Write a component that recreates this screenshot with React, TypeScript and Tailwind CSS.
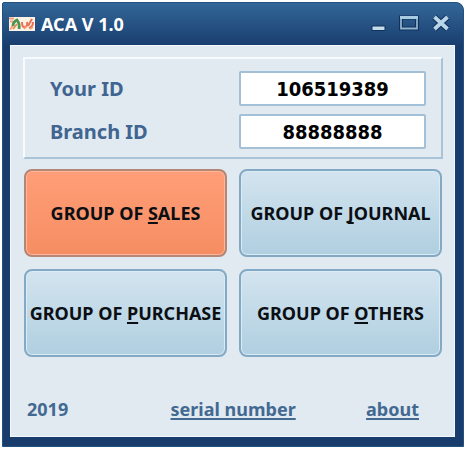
import React from "react";

type FieldProps = {
    id: string,
    label: string,
    value: string
}

type GroupButtonProps = {
    accessKey: string,
    rest: string,
    active?: boolean
}

const AppIcon: React.FC = () => {
    return(
        <svg width="26" height="14" viewBox="0 0 26 14" aria-hidden="true">
            <rect width="26" height="14" fill="#fdf3e4"/>
            <path d="M0 1.500h5M1 4.500h3M1 12.500l3-4" stroke="#f0a27c" strokeWidth="1.800"/>
            <path d="M4 9Q4 5 8 3q3 4 2 9" fill="none" stroke="#4d9454" strokeWidth="2.8"/>
            <path d="M4 12l4-5" stroke="#e08a4c" strokeWidth="1.8"/>
            <path d="M13 5q0 6 3 5t2-5M19 9l4-7M20 11q4-1 4-6" fill="none" stroke="#ee6f55" strokeWidth="2"/>
            <path d="M15 12l3-3M21 12l3-2" stroke="#f3a073" strokeWidth="1.6"/>
        </svg>
    )
}

const TitleBar: React.FC = () => {
    return(
        <header className="flex h-[42px] items-center pl-1.5 pr-3">
            <AppIcon/>
            <h1 className="ml-1.5 flex-1 font-['Noto_Sans',sans-serif] text-[18px] leading-6 font-bold text-white">ACA V 1.0</h1>
            <div className="flex items-center gap-3">
                <button type="button" aria-label="Minimize" className="flex h-5 w-4 items-center justify-center">
                    <svg width="16" height="18" viewBox="0 0 16 18">
                        <path d="M1 11h13v4.500h-13z" fill="#c5dcea" stroke="#12305a"/>
                    </svg>
                </button>
                <button type="button" aria-label="Maximize" className="flex h-5 w-5 items-center justify-center">
                    <svg width="20" height="18" viewBox="0 0 20 18">
                        <rect x="2" y="2.500" width="16" height="11" fill="none" stroke="#12305a" strokeWidth="4"/>
                        <path d="M2 2v11.500h16V2" fill="none" stroke="#8db3d0" strokeWidth="1.8"/>
                        <path d="M1 2.500h18" stroke="#a9cbe2" strokeWidth="3"/>
                    </svg>
                </button>
                <button type="button" aria-label="Close" className="flex h-5 w-5 items-center justify-center">
                    <svg width="20" height="18" viewBox="0 0 20 18">
                        <path d="M3.500 2l13 12M16.500 2l-13 12" stroke="#12305a" strokeWidth="6"/>
                        <path d="M3.500 2l13 12M16.500 2l-13 12" stroke="#b9d5e8" strokeWidth="3.800"/>
                    </svg>
                </button>
            </div>
        </header>
    )
}

const Field: React.FC<FieldProps> = ({id, label, value}) => {
    return(
        <div className="grid grid-cols-2 items-center">
            <label htmlFor={id} className="pl-[25px] font-['Noto_Sans',sans-serif] text-[20px] leading-6 font-bold text-[#3f6590]">
                {label}
            </label>
            <input
            id={id} type="text" defaultValue={value}
            className="ml-1.5 mr-[15px] h-[35px] min-w-0 rounded-xs border-2 border-[#a4c0d6] bg-white text-center font-['DejaVu_Sans_Condensed','DejaVu_Sans',sans-serif] text-[20px] font-bold text-black"/>
        </div>
    )
}

const GroupButton: React.FC<GroupButtonProps> = ({accessKey, rest, active}) => {
    const colors = active
        ? "border-[#b48675] from-[#ff9e78] to-[#f68d62] inset-ring-[#ffb79c]"
        : "border-[#83a9c4] from-[#d3e4ef] to-[#b0cfe0] inset-ring-[#d9ebf5]"
    return(
        <button type="button" className={`h-22 rounded-lg border-2 bg-linear-to-b inset-ring font-['Noto_Sans',sans-serif] text-[18px] leading-6 font-bold whitespace-nowrap text-[#0b0f14] ${colors}`}>
            GROUP OF <span className="underline decoration-2 underline-offset-2 [text-decoration-skip-ink:none]">{accessKey}</span>{rest}
        </button>
    )
}

export default function App() {
    return(
        <div className="min-h-screen bg-white p-0.5">
            <div className="rounded-tl-xs rounded-tr-lg border border-[#24517f] bg-[#183c6c] bg-linear-to-b from-[#336799] to-[#183c6c] to-10%">
                <TitleBar/>
                <main className="mr-2 mb-[9px] ml-[7px] border border-[#f3f8fc] bg-[#e2eaf1] pt-[11px] pr-[11px] pb-[15px] pl-3">
                    <section className="flex flex-col gap-2 border-2 border-t-[#f8fbfd] border-r-[#a9c3d8] border-b-[#a9c3d8] border-l-[#f8fbfd] pt-3 pb-2">
                        <Field id="your-id" label="Your ID" value="106519389"/>
                        <Field id="branch-id" label="Branch ID" value="88888888"/>
                    </section>
                    <div className="mt-2.5 grid grid-cols-2 gap-3 px-px">
                        <GroupButton accessKey="S" rest="ALES" active/>
                        <GroupButton accessKey="J" rest="OURNAL"/>
                        <GroupButton accessKey="P" rest="URCHASE"/>
                        <GroupButton accessKey="O" rest="THERS"/>
                    </div>
                    <footer className="mt-10 flex items-center justify-between pr-6 pl-1 font-['Noto_Sans',sans-serif] text-[18px] leading-6 font-bold text-[#426991]">
                        <span>2019</span>
                        <a href="#serial-number" className="ml-8 underline decoration-2 underline-offset-2">serial number</a>
                        <a href="#about" className="underline decoration-2 underline-offset-2">about</a>
                    </footer>
                </main>
            </div>
        </div>
    )
}
